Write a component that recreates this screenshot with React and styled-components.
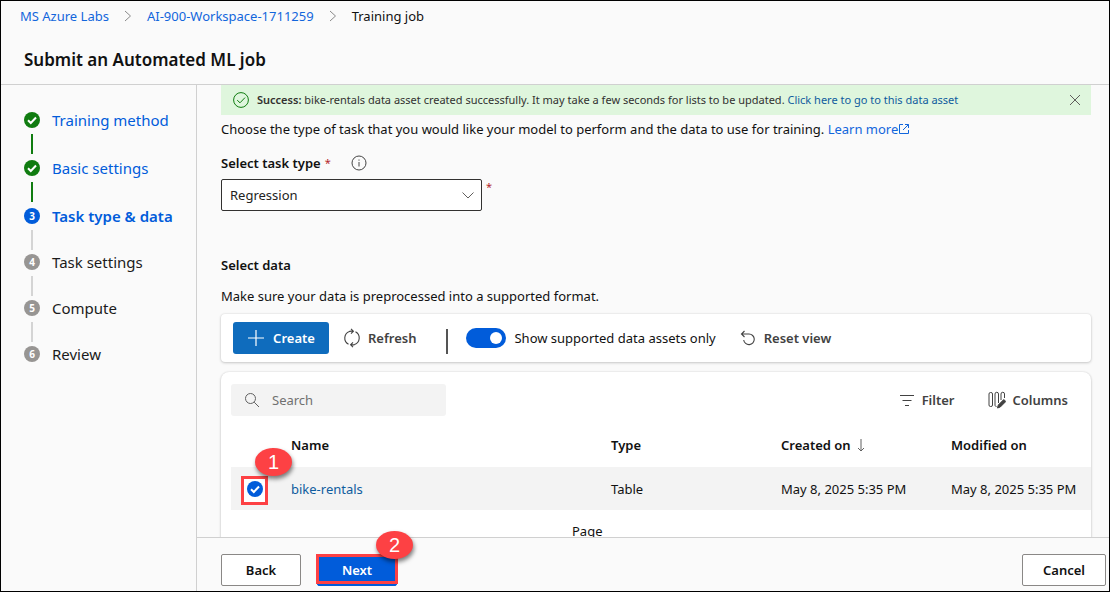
import React from "react";
import styled, { createGlobalStyle, css } from "styled-components";

const GlobalStyle = createGlobalStyle`
  *, *::before, *::after { box-sizing: border-box; }
  body { margin: 0; background: #fafafa; }
  body, button, input, select { font-family: "Noto Sans", "Open Sans", sans-serif; }
`;

const Frame = styled.div`
  display: flex;
  flex-direction: column;
  height: 100vh;
  border: 1px solid #000;
  background: #fafafa;
  color: #111;
  font-size: 13px;
  line-height: 20px;
`;

const Header = styled.header`
  flex: none;
  border-bottom: 1px solid #d0d0d0;
`;

const Breadcrumbs = styled.nav`
  display: flex;
  align-items: center;
  gap: 14px;
  padding: 5px 19px 0;
  svg { color: #8a8a8a; }
`;

const Title = styled.h1`
  margin: 0;
  padding: 22px 23px 12px;
  font-size: 17px;
  font-weight: 600;
  line-height: 24px;
`;

const Link = styled.a`
  color: ${(p) => (p.$deep ? "#0f5c9e" : "#1266dc")};
  text-decoration: none;
`;

const Body = styled.div`
  display: flex;
  flex: 1;
  min-height: 0;
`;

const Sidebar = styled.nav`
  flex: none;
  width: 196px;
  padding: 23px 12px 0 23px;
  border-right: 1px solid #d0d0d0;
`;

const Steps = styled.ol`
  margin: 0;
  padding: 0;
  list-style: none;
`;

const StepItem = styled.li`
  display: flex;
  gap: 12px;
  height: ${(p) => (p.$state === "done" ? 48 : 46)}px;
`;

const StepTrack = styled.div`
  display: flex;
  flex-direction: column;
  align-items: center;
  gap: 6px;
  padding-top: 4px;
`;

const StepDot = styled.span`
  display: grid;
  flex: none;
  place-items: center;
  width: 16px;
  height: 16px;
  border-radius: 50%;
  background: ${(p) => ({ done: "#107c10", active: "#015cda", todo: "#979593" })[p.$state]};
  color: #fff;
  font-size: 10px;
  font-weight: 700;
  line-height: 16px;
`;

const StepLine = styled.span`
  flex: none;
  width: 2px;
  height: 20px;
  background: ${(p) => (p.$state === "done" ? "#107c10" : "#d4d4d4")};
`;

const StepLabel = styled.a`
  font-size: 15px;
  line-height: 24px;
  text-decoration: none;
  color: ${(p) => (p.$state === "todo" ? "#1b1b1b" : "#015cda")};
  font-weight: ${(p) => (p.$state === "active" ? 600 : 400)};
`;

const Content = styled.div`
  display: flex;
  flex-direction: column;
  flex: 1;
  min-width: 0;
`;

const Scroller = styled.main`
  flex: 1;
  min-height: 0;
  overflow: hidden;
  padding: 0 18px 0 24px;
`;

const Banner = styled.div`
  display: flex;
  align-items: center;
  gap: 8px;
  height: 30px;
  padding: 0 10px 0 12px;
  background: #dff6dd;
  color: #323130;
  font-size: 11px;
  strong { font-weight: 600; }
  p { flex: 1; margin: 0; }
`;

const IconButton = styled.button`
  display: grid;
  place-items: center;
  padding: 0;
  border: 0;
  background: none;
  color: #605e5c;
`;

const Intro = styled.p`
  margin: 0;
  padding: 4px 0 14px;
  svg { vertical-align: -1px; }
`;

const FieldLabel = styled.div`
  display: flex;
  align-items: center;
  font-weight: 600;
  svg { margin-left: 20px; color: #444; }
`;

const Required = styled.span`
  margin-left: 4px;
  color: #b3272c;
  font-size: 11px;
  font-weight: 400;
  line-height: 16px;
`;

const SelectRow = styled.div`
  display: flex;
  align-items: flex-start;
  padding-top: 6px;
`;

const SelectBox = styled.div`
  display: grid;
  align-items: center;
  width: 261px;
  > * { grid-area: 1 / 1; }
  svg { justify-self: end; margin-right: 7px; color: #605e5c; pointer-events: none; }
`;

const Select = styled.select`
  appearance: none;
  width: 100%;
  height: 32px;
  padding: 0 8px;
  border: 1px solid #323130;
  border-radius: 2px;
  background: #fff;
  color: #222;
  font-size: 13px;
`;

const SectionTitle = styled.h2`
  margin: 44px 0 11px;
  font-size: 13px;
  font-weight: 600;
  line-height: 20px;
`;

const Text = styled.p`
  margin: 0 0 8px;
`;

const Card = styled.section`
  background: #fff;
  border-radius: ${(p) => p.$radius}px;
  box-shadow: 0 1px 3px rgba(0, 0, 0, 0.18), 0 0 2px rgba(0, 0, 0, 0.12);
`;

const Toolbar = styled(Card)`
  display: flex;
  align-items: center;
  height: 48px;
  padding: 0 12px;
  margin-bottom: 10px;
`;

const ToolButton = styled.button`
  display: flex;
  align-items: center;
  gap: ${(p) => p.$gap || 8}px;
  height: 32px;
  padding: 0;
  border: 0;
  background: none;
  color: #424242;
  font-size: 13px;
  font-weight: 600;
  ${(p) => p.$primary && css`
    justify-content: center;
    width: 96px;
    margin-right: 14px;
    border-radius: 3px;
    background: #0f6cbd;
    color: #fff;
  `}
`;

const Divider = styled.span`
  width: 2px;
  height: 25px;
  margin: 6px 18px 0 30px;
  background: #555;
`;

const ToggleLabel = styled.label`
  display: flex;
  align-items: center;
  gap: 8px;
  margin-right: 24px;
`;

const Toggle = styled.input`
  appearance: none;
  display: flex;
  align-items: center;
  justify-content: flex-end;
  width: 40px;
  height: 20px;
  margin: 0;
  padding: 0 4px;
  border-radius: 10px;
  background: #015cda;
  &::after {
    content: "";
    width: 12px;
    height: 12px;
    border-radius: 50%;
    background: #fff;
  }
`;

const TableCard = styled(Card)`
  padding: 12px 0 40px 10px;
`;

const TableTools = styled.div`
  display: flex;
  align-items: center;
  gap: 33px;
  padding-right: 23px;
`;

const SearchBox = styled.label`
  display: flex;
  align-items: center;
  gap: 12px;
  width: 215px;
  height: 32px;
  margin-right: auto;
  padding: 0 13px;
  border-radius: 3px;
  background: #f3f3f3;
  color: #616161;
`;

const SearchInput = styled.input`
  flex: 1;
  min-width: 0;
  padding: 0;
  border: 0;
  outline: 0;
  background: none;
  font-size: 13px;
  &::placeholder { color: #707070; opacity: 1; }
`;

const Table = styled.table`
  width: 100%;
  margin-top: 8px;
  border-collapse: collapse;
  table-layout: fixed;
  th, td { padding: 0; text-align: left; white-space: nowrap; }
  th { height: 43px; padding-bottom: 2px; font-weight: 600; }
  th svg { margin-left: 2px; vertical-align: -2px; color: #616161; }
  td { height: 43px; background: #f3f3f3; }
`;

const Col = styled.col`
  width: ${(p) => (p.$w ? `${p.$w}px` : "auto")};
`;

const Pager = styled.div`
  padding: 11px 0 0 341px;
`;

const Highlight = styled.div`
  position: relative;
  display: grid;
  justify-items: center;
  align-items: start;
  width: 27px;
  height: 29px;
  margin: 3px 0 0 10px;
  padding-top: 2px;
  border: 3px solid #fd4144;
  background: #fff;
`;

const Callout = styled.span`
  position: absolute;
  display: grid;
  place-items: center;
  width: 37px;
  height: 28px;
  border-radius: 50%;
  background: #fd4144;
  box-shadow: 1px 3px 4px rgba(0, 0, 0, 0.5);
  color: #fff;
  font: 400 20px/28px "Liberation Sans", sans-serif;
  top: ${(p) => p.$top}px;
  left: ${(p) => p.$left}px;
`;

const RoundCheck = styled.span`
  display: grid;
  width: 16px;
  height: 16px;
  > * { grid-area: 1 / 1; }
  svg { pointer-events: none; }
`;

const CheckInput = styled.input`
  appearance: none;
  width: 16px;
  height: 16px;
  margin: 0;
  border-radius: 50%;
  background: #015cda;
`;

const Footer = styled.footer`
  display: flex;
  flex: none;
  align-items: flex-start;
  gap: 16px;
  height: 54px;
  padding: 16px 3px 0 24px;
  border-top: 1px solid #d0d0d0;
`;

const Button = styled.button`
  display: block;
  width: ${(p) => p.$w || 80}px;
  height: 32px;
  padding: 0;
  border: 1px solid ${(p) => (p.$primary ? "#015cda" : "#8a8886")};
  border-radius: 2px;
  background: ${(p) => (p.$primary ? "#015cda" : "#fff")};
  color: ${(p) => (p.$primary ? "#fff" : "#111")};
  font-size: 13px;
  font-weight: 600;
`;

const NextWrap = styled.div`
  position: relative;
  margin-right: auto;
`;

const NextOutline = styled.span`
  position: absolute;
  inset: 0 -1px 2px -1px;
  border: 3px solid #fd4144;
  pointer-events: none;
`;

const Svg = ({ size = 16, w = 1, children }) => (
  <svg width={size} height={size} viewBox={`0 0 ${size} ${size}`} fill="none" stroke="currentColor" strokeWidth={w} aria-hidden="true">
    {children}
  </svg>
);

const ChevronRight = () => (
  <svg width="10" height="12" viewBox="0 0 10 12" fill="none" stroke="currentColor" aria-hidden="true">
    <path d="M2 1 7.500 6 2 11" />
  </svg>
);

const Check = () => (
  <Svg w={2}><path d="M4 8.2 6.8 11 12 5.5" stroke="#fff" /></Svg>
);

const steps = [
  { label: "Training method", state: "done" },
  { label: "Basic settings", state: "done" },
  { label: "Task type & data", state: "active" },
  { label: "Task settings", state: "todo" },
  { label: "Compute", state: "todo" },
  { label: "Review", state: "todo" },
];

export default function App() {
  return (
    <Frame>
      <GlobalStyle />
      <Header>
        <Breadcrumbs aria-label="Breadcrumb">
          <Link href="#labs">MS Azure Labs</Link>
          <ChevronRight />
          <Link href="#workspace">AI-900-Workspace-1711259</Link>
          <ChevronRight />
          <span>Training job</span>
        </Breadcrumbs>
        <Title>Submit an Automated ML job</Title>
      </Header>
      <Body>
        <Sidebar aria-label="Steps">
          <Steps>
            {steps.map(({ label, state }, i) => (
              <StepItem key={label} $state={state}>
                <StepTrack>
                  <StepDot $state={state}>{state === "done" ? <Check /> : i + 1}</StepDot>
                  {i < steps.length - 1 && <StepLine $state={state} />}
                </StepTrack>
                <StepLabel href={`#step-${i + 1}`} $state={state}>{label}</StepLabel>
              </StepItem>
            ))}
          </Steps>
        </Sidebar>
        <Content>
          <Scroller>
            <Banner role="status">
              <Svg>
                <circle cx="8" cy="8" r="7.4" stroke="#107c10" />
                <path d="M4.2 8.2 7 10.8l5-5.2" stroke="#107c10" />
              </Svg>
              <p>
                <strong>Success:</strong> bike-rentals data asset created successfully. It may take a few seconds for lists to be updated.{" "}
                <Link href="#asset" $deep>Click here to go to this data asset</Link>
              </p>
              <IconButton type="button" aria-label="Dismiss">
                <Svg size={12}><path d="m1 1 10 10M11 1 1 11" /></Svg>
              </IconButton>
            </Banner>
            <Intro>
              Choose the type of task that you would like your model to perform and the data to use for training.{" "}
              <Link href="#learn">
                Learn more
                <Svg size={12}><path d="M5 1.5H1.5v9h9V7M7 1.5h3.5V5M10.5 1.5 5 7" /></Svg>
              </Link>
            </Intro>
            <FieldLabel>
              <label htmlFor="task-type">Select task type</label>
              <Required>*</Required>
              <Svg>
                <circle cx="8" cy="8" r="7" />
                <path d="M8 7v4.5M8 4.5v1.2" />
              </Svg>
            </FieldLabel>
            <SelectRow>
              <SelectBox>
                <Select id="task-type" defaultValue="Regression">
                  <option>Regression</option>
                </Select>
                <Svg size={14}><path d="m1.500 4.500 5.500 5.500 5.500-5.500" /></Svg>
              </SelectBox>
              <Required>*</Required>
            </SelectRow>
            <SectionTitle>Select data</SectionTitle>
            <Text>Make sure your data is preprocessed into a supported format.</Text>
            <Toolbar $radius={4}>
              <ToolButton type="button" $primary>
                <Svg size={18} w={1.2}><path d="M9 1v16M1 9h16" /></Svg>
                Create
              </ToolButton>
              <ToolButton type="button" $gap={7}>
                <svg width="18" height="20" viewBox="0 0 18 20" fill="none" stroke="currentColor" strokeWidth="1.1" aria-hidden="true">
                  <path d="M5.500 16.200A7 7 0 0 1 6.500 3.400Q8 3 10 3.200M12.500 3.800A7 7 0 0 1 11.500 16.600Q10 17 8 16.800M8 .8l2.400 2.400L8 5.600M10 14.400l-2.400 2.400L10 19.200" />
                </svg>
                Refresh
              </ToolButton>
              <Divider />
              <ToggleLabel>
                <Toggle type="checkbox" role="switch" defaultChecked />
                Show supported data assets only
              </ToggleLabel>
              <ToolButton type="button">
                <Svg w={1.1}><path d="M4.500 1 1.500 4l3 3M1.500 4H9a5.300 5.300 0 1 1-5.300 6" /></Svg>
                Reset view
              </ToolButton>
            </Toolbar>
            <TableCard $radius={8}>
              <TableTools>
                <SearchBox>
                  <Svg><circle cx="6.500" cy="6.500" r="5" /><path d="m10.200 10.200 4.800 4.800" /></Svg>
                  <SearchInput type="search" placeholder="Search" aria-label="Search" />
                </SearchBox>
                <ToolButton type="button">
                  <Svg size={14}><path d="M0 2.500h14M2.500 7.500h9M5 12.500h4" /></Svg>
                  Filter
                </ToolButton>
                <ToolButton type="button" $gap={7}>
                  <Svg size={18}>
                    <rect x="1" y="1.500" width="3.500" height="14" rx="1.500" />
                    <path d="M8.500 15.500C7.500 15.500 7 15 7 14V3a1.500 1.500 0 0 1 3.500 0v9M13 9V3a1.500 1.500 0 0 1 3.500 0v4" />
                    <path d="m9.500 17 .8-3 5.500-5.500 2 2-5.500 5.500z" fill="currentColor" />
                  </Svg>
                  Columns
                </ToolButton>
              </TableTools>
              <Table>
                <colgroup>
                  <Col $w={60} />
                  <Col />
                  <Col $w={170} />
                  <Col $w={170} />
                  <Col $w={140} />
                </colgroup>
                <thead>
                  <tr>
                    <th aria-label="Selected" />
                    <th>Name</th>
                    <th>Type</th>
                    <th>
                      Created on{" "}
                      <svg width="10" height="14" viewBox="0 0 10 14" fill="none" stroke="currentColor" aria-hidden="true">
                        <path d="M5 1v12M2 10l3 3 3-3" />
                      </svg>
                    </th>
                    <th>Modified on</th>
                  </tr>
                </thead>
                <tbody>
                  <tr>
                    <td>
                      <Highlight>
                        <RoundCheck>
                          <CheckInput type="checkbox" defaultChecked aria-label="Select bike-rentals" />
                          <Check />
                        </RoundCheck>
                        <Callout $top={-31} $left={11}>1</Callout>
                      </Highlight>
                    </td>
                    <td><Link href="#bike-rentals" $deep>bike-rentals</Link></td>
                    <td>Table</td>
                    <td>May 8, 2025 5:35 PM</td>
                    <td>May 8, 2025 5:35 PM</td>
                  </tr>
                </tbody>
              </Table>
              <Pager>Page</Pager>
            </TableCard>
          </Scroller>
          <Footer>
            <Button type="button">Back</Button>
            <NextWrap>
              <Button type="button" $primary>Next</Button>
              <NextOutline />
              <Callout $top={-23} $left={59}>2</Callout>
            </NextWrap>
            <Button type="button" $w={84}>Cancel</Button>
          </Footer>
        </Content>
      </Body>
    </Frame>
  );
}
